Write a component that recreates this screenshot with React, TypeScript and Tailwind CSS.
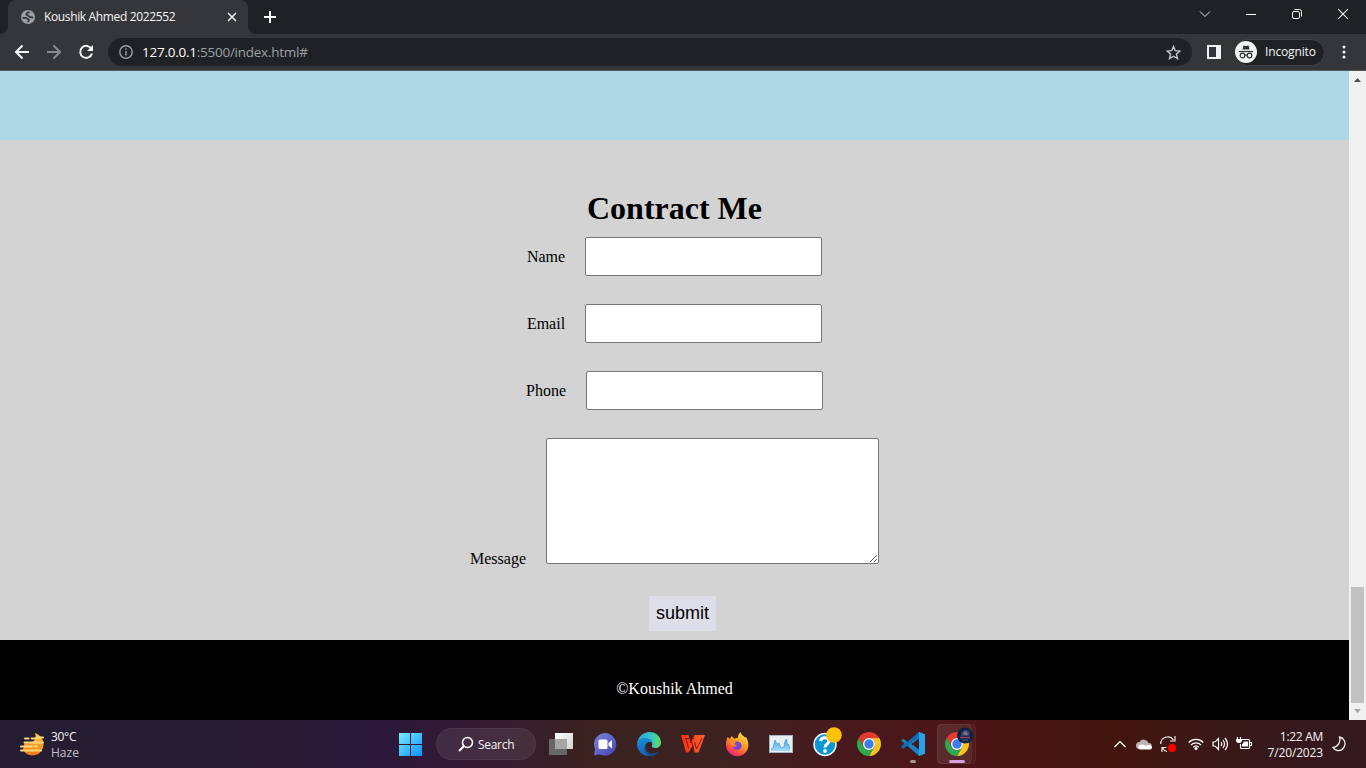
import React from 'react';

function TabBar() {
  return (
    <div className="flex h-[34px] bg-[#202124]">
      <div className="flex w-2 items-end bg-[#35363a]">
        <div className="h-[34px] w-2 rounded-br-lg bg-[#202124]" />
      </div>
      <div className="flex h-[34px] w-60 items-center rounded-t-lg bg-[#35363a] pl-[13px]">
        <svg width="14" height="14" viewBox="0 0 14 14">
          <circle cx="7" cy="7" r="7" fill="#9aa0a6" />
          <path d="M8.500 1.800C7.500 3.200 5.300 2.500 5.300 4.200c0 1.600 2.200.8 2.900 2.300.5 1 1.800 1 4 .8M1.500 7.800h3c1.800 0 1.300 1.500 2.800 1.500 1 0 1 2-.9 2.700" fill="none" stroke="#35363a" strokeWidth="1.7" />
        </svg>
        <span className="ml-[9px] w-[133px] text-[12px] leading-4 tracking-[-0.36px] whitespace-nowrap text-[#f4f5f6]">Koushik Ahmed 2022552</span>
        <svg className="mr-[11px] ml-auto" width="10" height="10" viewBox="0 0 10 10" stroke="#f1f3f4" strokeWidth="1.5">
          <path d="M1 1l8 8M9 1L1 9" />
        </svg>
      </div>
      <div className="h-[34px] w-2 bg-[#35363a]">
        <div className="h-[34px] w-2 rounded-bl-lg bg-[#202124]" />
      </div>
      <svg className="mt-[11px] ml-2" width="12" height="12" viewBox="0 0 12 12" stroke="#fff" strokeWidth="2">
        <path d="M6 0v12M0 6h12" />
      </svg>
      <div className="ml-auto flex items-start pt-[7px]">
        <svg className="mr-8" width="14" height="14" viewBox="0 0 14 14" fill="none" stroke="#e4e5e7">
          <path d="M2 4.500l5 5 5-5" />
        </svg>
        <svg className="mr-8" width="14" height="14" viewBox="0 0 14 14" stroke="#fff">
          <path d="M2 7.500h10" />
        </svg>
        <svg className="mr-8" width="14" height="14" viewBox="0 0 14 14" fill="none" stroke="#f3f3f3">
          <rect x="2.500" y="4.500" width="7" height="7" rx="1.500" />
          <path d="M4.500 2.500H9.500a2 2 0 0 1 2 2V9.500" />
        </svg>
        <svg className="mr-4" width="14" height="14" viewBox="0 0 14 14" stroke="#f3f3f3" strokeWidth="1.100">
          <path d="M2.200 2.200l9.600 9.600M11.800 2.200L2.200 11.800" />
        </svg>
      </div>
    </div>
  );
}

function Toolbar() {
  return (
    <div className="flex h-[37px] items-center border-b border-[#57585c] bg-[#35363a] pl-[14px]">
      <svg width="16" height="16" viewBox="0 0 16 16" fill="none" stroke="#f4f5f6" strokeWidth="2">
        <path d="M15 8H2M8.500 1.500L2 8l6.500 6.500" />
      </svg>
      <svg className="ml-4" width="16" height="16" viewBox="0 0 16 16" fill="none" stroke="#88898c" strokeWidth="2">
        <path d="M1 8h13M7.500 1.500L14 8l-6.500 6.500" />
      </svg>
      <svg className="ml-4" width="16" height="16" viewBox="0 0 16 16" fill="none" stroke="#f4f5f6" strokeWidth="2">
        <path d="M13.500 5A6 6 0 1 0 14 9.500" />
        <path d="M15 1v6H9z" fill="#f4f5f6" stroke="none" />
      </svg>
      <div className="ml-[14px] flex h-7 w-[1084px] items-center rounded-full bg-[#202124] pl-[11px]">
        <svg width="14" height="14" viewBox="0 0 14 14" fill="none" stroke="#9aa0a6" strokeWidth="1.400">
          <circle cx="7" cy="7" r="6.200" />
          <path d="M7 6v4.500M7 3.300v1.500" />
        </svg>
        <span className="ml-[9px] text-[13.500px] leading-5 tracking-[-0.25px] whitespace-nowrap text-[#9aa0a6]">
          <span className="text-white">127.0.0.1</span>:5500/index.html#
        </span>
        <svg className="mr-[11px] ml-auto" width="15" height="15" viewBox="0 0 15 15" fill="none" stroke="#c3c6c9" strokeWidth="1.400">
          <path d="M7.500 1.500l1.800 4.200 4.600.4-3.500 3 1.100 4.500-4-2.400-4 2.400 1.100-4.500-3.500-3 4.600-.4z" />
        </svg>
      </div>
      <svg className="ml-[15px]" width="14" height="14" viewBox="0 0 14 14">
        <path d="M0 0h14v14H0zM2 2v10h7V2z" fill="#f1f3f4" fillRule="evenodd" />
      </svg>
      <div className="ml-[13px] flex h-[27px] w-[91px] items-center rounded-full border border-[#414246] bg-[#202124]">
        <svg width="22" height="22" viewBox="0 0 22 22">
          <circle cx="11" cy="11" r="11" fill="#f1f3f4" />
          <path d="M7.500 8.500l1-4L11 5l2.500-.5 1 4z" fill="#303135" />
          <path d="M4 10.500h14" stroke="#303135" strokeWidth="1.200" />
          <g fill="none" stroke="#303135" strokeWidth="1.200">
            <circle cx="7.500" cy="14.500" r="2.300" />
            <circle cx="14.500" cy="14.500" r="2.300" />
            <path d="M9.800 14.300q1.200-.8 2.400 0" />
          </g>
        </svg>
        <span className="ml-2 text-[12px] leading-4 tracking-[-0.14px] whitespace-nowrap text-[#f1f3f4]">Incognito</span>
      </div>
      <svg className="ml-[17px]" width="4" height="16" viewBox="0 0 4 16" fill="#f1f3f4">
        <circle cx="2" cy="3" r="1.500" />
        <circle cx="2" cy="8" r="1.500" />
        <circle cx="2" cy="13" r="1.500" />
      </svg>
    </div>
  );
}

const field = 'ml-5 h-[39px] w-[237px] rounded-[2px] border border-[#767676] bg-white outline-none';

function Page() {
  return (
    <div className='flex w-[1349px] flex-col font-["Liberation_Serif",serif] text-[16px] leading-[18px] text-black'>
      <div className="h-[69px] bg-[#add8e6]" />
      <div className="h-[500px] bg-[#d3d3d3] pt-[50px]">
        <h1 className="h-[47px] text-center text-[32px] leading-9 font-bold">Contract Me</h1>
        {['Name', 'Email', 'Phone'].map((label) => (
          <div key={label} className="mb-7 flex items-center justify-center">
            <label className="pt-px">{label}</label>
            <input className={field} />
          </div>
        ))}
        <div className="flex items-end justify-center">
          <label className="relative top-1">Message</label>
          <textarea className="ml-5 block h-[126px] w-[333px] resize rounded-[2px] border border-[#767676] bg-white outline-none" />
        </div>
        <div className="mt-8 flex justify-center pl-4">
          <button className='h-[35px] w-[67px] bg-[#dedeea] font-["Liberation_Sans",sans-serif] text-[18px] leading-[21px]'>submit</button>
        </div>
      </div>
      <footer className="h-20 bg-black pt-10 text-center text-white">©Koushik Ahmed</footer>
    </div>
  );
}

function Scrollbar() {
  return (
    <div className="flex w-[17px] flex-col items-center bg-[#f1f1f1]">
      <svg width="17" height="17" viewBox="0 0 17 17" fill="#505050">
        <path d="M5 11l3.500-4 3.500 4z" />
      </svg>
      <div className="mt-[499px] h-[116px] w-[13px] bg-[#c1c1c1]" />
      <svg width="17" height="17" viewBox="0 0 17 17" fill="#a3a3a3">
        <path d="M5 6l3.500 4 3.500-4z" />
      </svg>
    </div>
  );
}

function Chrome() {
  return (
    <g>
      <path d="M1.610 6A12 12 0 0 1 22.390 6H12A6 6 0 0 0 6.800 15z" fill="#e33b2e" />
      <path d="M22.390 6A12 12 0 0 1 12 24L17.200 15A6 6 0 0 0 12 6z" fill="#fcc31e" />
      <path d="M12 24A12 12 0 0 1 1.610 6L6.800 15A6 6 0 0 0 17.200 15z" fill="#2da94f" />
      <circle cx="12" cy="12" r="6" fill="#fff" />
      <circle cx="12" cy="12" r="4.700" fill="#3b7ded" />
    </g>
  );
}

function Cell({ children }: { children: React.ReactNode }) {
  return (
    <div className="flex w-11 items-center justify-center">
      <svg width="24" height="24" viewBox="0 0 24 24" className="overflow-visible">{children}</svg>
    </div>
  );
}

function Taskbar() {
  return (
    <div className="flex h-12 bg-[linear-gradient(90deg,#241d31_0%,#281b32_20%,#2c183a_28%,#361c31_36%,#39221f_43%,#3c2221_53%,#471b1e_60%,#4c1517_71%,#42160f_82%,#38181a_91%,#33191f_100%)] text-[#f5f3f5]">
      <div className="flex w-[399px] items-center pl-5">
        <svg width="24" height="24" viewBox="0 0 24 24">
          <defs>
            <linearGradient id="haze" x2="0" y2="1"><stop stopColor="#ffc83f" /><stop offset="1" stopColor="#f17818" /></linearGradient>
          </defs>
          <path d="M15 1c3 1 8.500 4.500 8.500 11a11 11 0 0 1-20.500 6L4.500 11C10 12.500 18 9 15 1z" fill="url(#haze)" />
          <path d="M5 6.500h3.500M11.500 6.500h4M16.500 5.500h6.500M4.500 10.500h18.500M1 14.500h11M14.500 14.500h2.500M1 18.500h20" stroke="#fbd779" strokeWidth="2" strokeLinecap="round" />
        </svg>
        <div className="mt-[2px] ml-[7px] text-[12px] leading-4">
          <div className="tracking-[-0.3px]">30°C</div>
          <div className="text-[#c4bfc8]">Haze</div>
        </div>
      </div>
      <svg className="mt-[13px]" width="23" height="23" viewBox="0 0 23 23">
        <defs>
          <linearGradient id="win" x2="1" y2="1"><stop stopColor="#7ceaff" /><stop offset="1" stopColor="#0693fa" /></linearGradient>
        </defs>
        <path d="M0 0h11v11H0zM12 0h11v11H12zM0 12h11v11H0zM12 12h11v11H12z" fill="url(#win)" />
      </svg>
      <div className="mt-2 ml-[14px] flex h-8 w-[100px] items-center rounded-full border border-white/5 bg-white/8 pl-[21px]">
        <svg width="16" height="16" viewBox="0 0 16 16" fill="none" stroke="#fff" strokeWidth="1.600">
          <circle cx="9.500" cy="6.500" r="5" />
          <path d="M6 10l-5 5" strokeWidth="2" />
        </svg>
        <span className="mt-px ml-[4px] text-[12px] leading-4 tracking-[-0.3px]">Search</span>
      </div>
      <div className="ml-[3px] flex w-[440px]">
        <Cell>
          <defs>
            <linearGradient id="tv" x2="1" y2="1"><stop stopColor="#fff" /><stop offset="1" stopColor="#d2d2d2" /></linearGradient>
          </defs>
          <path d="M0 7h18v16H0z" fill="#696766" />
          <path d="M6 1h18v16H6z" fill="url(#tv)" />
          <path d="M6 7h12v10H6z" fill="#a7a6a5" />
        </Cell>
        <Cell>
          <defs>
            <linearGradient id="chat" x2="1" y2="1"><stop stopColor="#7b83d9" /><stop offset=".6" stopColor="#5b5fc7" /><stop offset="1" stopColor="#4545a8" /></linearGradient>
          </defs>
          <path d="M12 1a11.300 11.300 0 1 1-5.500 21.200L1 23.500 2 17A11.300 11.300 0 0 1 12 1z" fill="url(#chat)" />
          <rect x="5.500" y="7.500" width="9" height="9.500" rx="1.500" fill="#fff" />
          <path d="M15.500 11l3.500-3v8.500l-3.500-3z" fill="#fff" />
        </Cell>
        <Cell>
          <defs>
            <linearGradient id="edgeA" x2="1"><stop stopColor="#28a9e5" /><stop offset=".6" stopColor="#35c5c8" /><stop offset="1" stopColor="#67dc58" /></linearGradient>
            <linearGradient id="edgeB" x2="0" y2="1"><stop stopColor="#1a8bd8" /><stop offset="1" stopColor="#1665b4" /></linearGradient>
          </defs>
          <path d="M0 11.500C1 5 6 0 12.500 0 19 0 24 5 24 10.500c0 3.500-2.500 5.500-5.500 5.500-2.500 0-4.500-1-3.500-2.500C16.500 10 13 7 9.500 7 5 6.500 1.500 8 0 11.500z" fill="url(#edgeA)" />
          <path d="M0 12c.5-4.500 5.500-7 10.500-5.500C13 7.200 15 9 15 11.500c-2-2.500-5.500-1.500-6.500 1.500-1.200 4 1.800 8.500 6 10.500C6.500 25.500 0 19.500 0 12z" fill="url(#edgeB)" />
          <path d="M9.500 10.500C5.500 13.500 8 21 14 21.500c3.500.2 6-1 8.300-2.800C20 22.500 16.500 24.300 13 24 7.500 22.500 5 14 9.500 10.500z" fill="#124b90" />
        </Cell>
        <Cell>
          <defs>
            <linearGradient id="wps" x2="1"><stop stopColor="#ff2c13" /><stop offset="1" stopColor="#ff6230" /></linearGradient>
          </defs>
          <path d="M0 3h7.500l2 8.500 4-8.500H24l-6.500 17.500h-4L12 13l-4.500 7.500H5z" fill="url(#wps)" />
          <path d="M4 6.500h9M5.200 7l2.300 9.500M9.500 7l3 9M21 6l-5.500 11-2-7" stroke="#7e1812" strokeWidth="1" fill="none" />
        </Cell>
        <Cell>
          <defs>
            <linearGradient id="fox" x1=".8" x2=".2" y2="1"><stop stopColor="#ffe84a" /><stop offset=".45" stopColor="#ff9926" /><stop offset=".75" stopColor="#ff4b43" /><stop offset="1" stopColor="#e31587" /></linearGradient>
          </defs>
          <path d="M2.500 5l2.500 2 1.500-3 3 2.800c1.500-1 2.200-1 3.500-1C13 3 14.500 1 15.500 0c.5 3 3 3.500 4.500 5.500l1-.5c3.500 6 3.200 12-1 16-4.500 4.500-12 4-16-.5S.5 10 2.500 5z" fill="url(#fox)" />
          <path d="M8 11.500c1.500-2 4-3 6-1.800 3 1.500 3.500 5.500 1 7.300-3 2-7 .5-7.500-2 2 .5 3-1 4.500-1.500-1.500-.8-2.500-2-4-2z" fill="#7543da" />
          <path d="M4 9c3-1.500 5 0 7 1.500-2 1-2 3-4.500 3.500" fill="#ff8b24" />
        </Cell>
        <Cell>
          <defs>
            <linearGradient id="perf" x2="0" y2="1"><stop stopColor="#3e9fe3" /><stop offset="1" stopColor="#a8ddfa" /></linearGradient>
          </defs>
          <rect x=".5" y="3.500" width="23" height="17" fill="#e9f0f4" stroke="#a5b5bd" />
          <path d="M2 17l2-1 2-8 2 4 2-1 2 5 3-1 1-6 1.500-2 1 7 1-2 1.500 5V19H2z" fill="url(#perf)" />
          <path d="M2 17l2-1 2-8 2 4 2-1 2 5 3-1 1-6 1.500-2 1 7 1-2 1.500 5" fill="none" stroke="#4aa3dc" strokeWidth=".8" />
        </Cell>
        <Cell>
          <circle cx="12" cy="12.500" r="11" fill="#0996d3" stroke="#fff" strokeWidth="1.400" />
          <path d="M7.500 9C8 4.500 16 4.500 16 9c0 3-4 3-4 6.500" stroke="#fff" strokeWidth="3" fill="none" />
          <circle cx="12" cy="19" r="1.900" fill="#fff" />
          <circle cx="21" cy="3" r="7.800" fill="#ffc20b" />
        </Cell>
        <Cell><Chrome /></Cell>
        <Cell>
          <path d="M18 0l6 2.500v19L18 24 6 13.500 2.500 16.500 0 15l3.500-3.500L0 8.500l2.500-1.800L6.500 10z" fill="#1683c5" />
          <path d="M0 15l2.500 1.500L18 5V0L6.500 10z" fill="#0870b2" />
          <path d="M18 0l6 2.500v19L18 24z" fill="#27a4ed" />
          <path d="M18 6.500v11L10.500 12z" fill="#47191b" />
          <rect x="9" y="28" width="6" height="3" rx="1.500" fill="#aa9595" />
        </Cell>
        <Cell>
          <rect x="-7.500" y="-7.500" width="38" height="39" rx="4" fill="#fff" fillOpacity=".03" stroke="#fff" strokeOpacity=".06" />
          <rect x="-7.500" y="-7.500" width="34" height="39" rx="4" fill="#fff" fillOpacity=".06" stroke="#fff" strokeOpacity=".06" />
          <Chrome />
          <circle cx="20" cy="3.500" r="8" fill="#0b2242" />
          <path d="M16 4V1l3-3h4l2 3-1 3z" fill="#314568" />
          <path d="M18 1l2-2 2 1 1 3h-4z" fill="#8c6983" />
          <path d="M15 5.500h10" stroke="#a63f6c" strokeWidth="1.500" />
          <path d="M17 8h6" stroke="#405d86" />
          <rect x="4" y="28" width="16" height="3" rx="1.500" fill="#d8a1df" />
        </Cell>
      </div>
      <div className="ml-auto flex items-center pr-[20px]">
        <svg className="mr-[9px]" width="14" height="16" viewBox="0 0 14 16" fill="none" stroke="#fff" strokeWidth="1.200"><path d="M1.500 11L7 5.500l5.500 5.500" /></svg>
        <svg className="mr-2" width="16" height="16" viewBox="0 0 16 16">
          <path d="M3.500 13a3.500 3.500 0 0 1 0-7 5 5 0 0 1 9 1A3 3 0 0 1 13 13z" fill="#bcb3b3" />
          <path d="M4 13.500a2.500 2.500 0 0 1-.5-4.500L7 8.500l3 1.300C13 8 16 9.500 16 11.500c0 1-.8 2-2 2z" fill="#fff" />
        </svg>
        <svg className="mr-3 overflow-visible" width="16" height="16" viewBox="0 0 16 16" fill="none" stroke="#eee5e5" strokeWidth="1.200">
          <path d="M.7 8A7 7 0 0 1 13.500 4M15 0v5h-5M6.500 11.500H2v4.500M2.500 12Q4 15 7 15.500" />
          <circle cx="12" cy="12" r="4" fill="#f00" stroke="none" />
        </svg>
        <svg className="mr-2" width="16" height="16" viewBox="0 0 16 16" fill="none" stroke="#fff" strokeWidth="1.300">
          <path d="M.7 6.500a10.300 10.300 0 0 1 14.600 0M3 9a7 7 0 0 1 10 0M5.300 11.200a3.900 3.900 0 0 1 5.400 0" />
          <circle cx="8" cy="12.500" r="1.500" fill="#fff" stroke="none" />
        </svg>
        <svg className="mr-2" width="16" height="16" viewBox="0 0 16 16" fill="none" stroke="#fff" strokeWidth="1.200">
          <path d="M1 6h2l3.500-3.500v11L3 10H1zM9 6q1.500 2 0 4M11 4q3 4 0 8M13 2q5 6 0 12" />
        </svg>
        <svg width="16" height="16" viewBox="0 0 16 16" fill="none" stroke="#fff" strokeWidth="1.200">
          <path d="M6 3.500h6.500q1 0 1 1v7q0 1-1 1H5.500q-1 0-1-1V8M14 6.500h1.500v3H14M1.500 1v2M4.500 1v2" />
          <path d="M0 3h6v2L4.500 7h-3L0 5z" fill="#fff" stroke="none" />
          <path d="M7.500 5.500h4.500v5h-6V8L7.500 7z" fill="#fff" stroke="none" />
        </svg>
        <div className="mt-px w-[71px] text-right text-[12px] leading-4 whitespace-nowrap">
          <div className="tracking-[-0.3px]">1:22 AM</div>
          <div className="tracking-[-0.15px]">7/20/2023</div>
        </div>
        <svg className="ml-[9px]" width="14" height="16" viewBox="0 0 14 16" fill="none" stroke="#eee" strokeWidth="1.300">
          <path d="M7.500 1C12 2 14 6.500 12.500 10 10.500 15.500 4 16 1 11.500 6 11 9 6 7.500 1z" />
        </svg>
      </div>
    </div>
  );
}

export default function App() {
  return (
    <div className='h-[768px] w-[1366px] overflow-hidden font-["Open_Sans","Noto_Sans",sans-serif]'>
      <TabBar />
      <Toolbar />
      <div className="flex h-[649px]">
        <Page />
        <Scrollbar />
      </div>
      <Taskbar />
    </div>
  );
}
